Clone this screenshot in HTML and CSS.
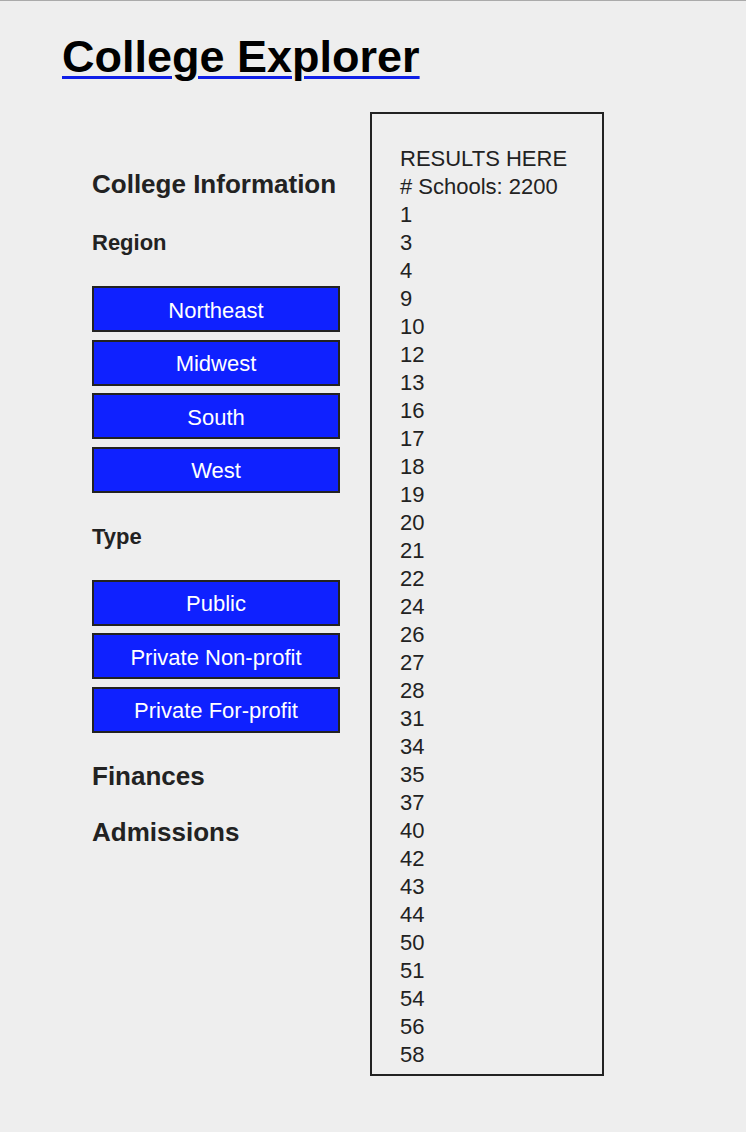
FILE: index.html
```html
<!DOCTYPE html>
<html lang="en">
<head>
<meta charset="utf-8">
<title>College Explorer</title>
<link rel="stylesheet" href="styles.css">
</head>
<body>
<div class="page">
  <h1 class="title"><a class="title-link" href="#">College Explorer</a></h1>
  <div class="main">
    <aside class="sidebar">
      <h2 class="section">College Information</h2>
      <h3 class="subsection">Region</h3>
      <div class="btn-group">
        <button class="btn">Northeast</button>
        <button class="btn">Midwest</button>
        <button class="btn">South</button>
        <button class="btn">West</button>
      </div>
      <h3 class="subsection">Type</h3>
      <div class="btn-group">
        <button class="btn">Public</button>
        <button class="btn">Private Non-profit</button>
        <button class="btn">Private For-profit</button>
      </div>
      <h2 class="section section-gap">Finances</h2>
      <h2 class="section section-gap2">Admissions</h2>
    </aside>
    <section class="results">
      <div class="line">RESULTS HERE</div>
      <div class="line"># Schools: 2200</div>
      <div class="line">1</div>
      <div class="line">3</div>
      <div class="line">4</div>
      <div class="line">9</div>
      <div class="line">10</div>
      <div class="line">12</div>
      <div class="line">13</div>
      <div class="line">16</div>
      <div class="line">17</div>
      <div class="line">18</div>
      <div class="line">19</div>
      <div class="line">20</div>
      <div class="line">21</div>
      <div class="line">22</div>
      <div class="line">24</div>
      <div class="line">26</div>
      <div class="line">27</div>
      <div class="line">28</div>
      <div class="line">31</div>
      <div class="line">34</div>
      <div class="line">35</div>
      <div class="line">37</div>
      <div class="line">40</div>
      <div class="line">42</div>
      <div class="line">43</div>
      <div class="line">44</div>
      <div class="line">50</div>
      <div class="line">51</div>
      <div class="line">54</div>
      <div class="line">56</div>
      <div class="line">58</div>
    </section>
  </div>
</div>
</body>
</html>
```

FILE: styles.css
```css
html, body {
  margin: 0;
  padding: 0;
  background: #eeeeee;
}

body {
  border-top: 1px solid #aaaaaa;
  font-family: "Liberation Sans", Arial, Helvetica, sans-serif;
  color: #222222;
}

.page {
  padding-left: 62px;
}

.title {
  margin: 30px 0 0 0;
  font-size: 45px;
  line-height: 52px;
  font-weight: bold;
}

.title-link {
  color: #000000;
  text-decoration: underline;
  text-decoration-color: #0f1fe8;
  text-decoration-thickness: 3px;
  text-underline-offset: 4px;
}

.main {
  display: flex;
  align-items: flex-start;
  gap: 30px;
  margin-top: 29px;
  padding-left: 30px;
}

.sidebar {
  width: 248px;
  padding-top: 57px;
}

.section {
  margin: 0;
  font-size: 26px;
  line-height: 30px;
  font-weight: bold;
  color: #222222;
}

.section-gap {
  margin-top: 28px;
}

.section-gap2 {
  margin-top: 26px;
}

.subsection {
  margin: 31px 0 0 0;
  font-size: 22px;
  line-height: 26px;
  font-weight: bold;
  color: #222222;
}

.btn-group {
  display: flex;
  flex-direction: column;
  gap: 7.5px;
  margin-top: 30px;
}

.btn {
  box-sizing: border-box;
  width: 248px;
  height: 46px;
  margin: 0;
  padding: 3px 0 0 0;
  border: 2px solid #222222;
  border-radius: 0;
  background: #0f21ff;
  color: #ffffff;
  font-family: "Liberation Sans", Arial, Helvetica, sans-serif;
  font-size: 22px;
  line-height: 26px;
  text-align: center;
}

.results {
  box-sizing: border-box;
  width: 234px;
  border: 2px solid #222222;
  padding: 31px 28px 5px 28px;
  font-size: 22px;
  line-height: 28px;
  color: #222222;
}
```
